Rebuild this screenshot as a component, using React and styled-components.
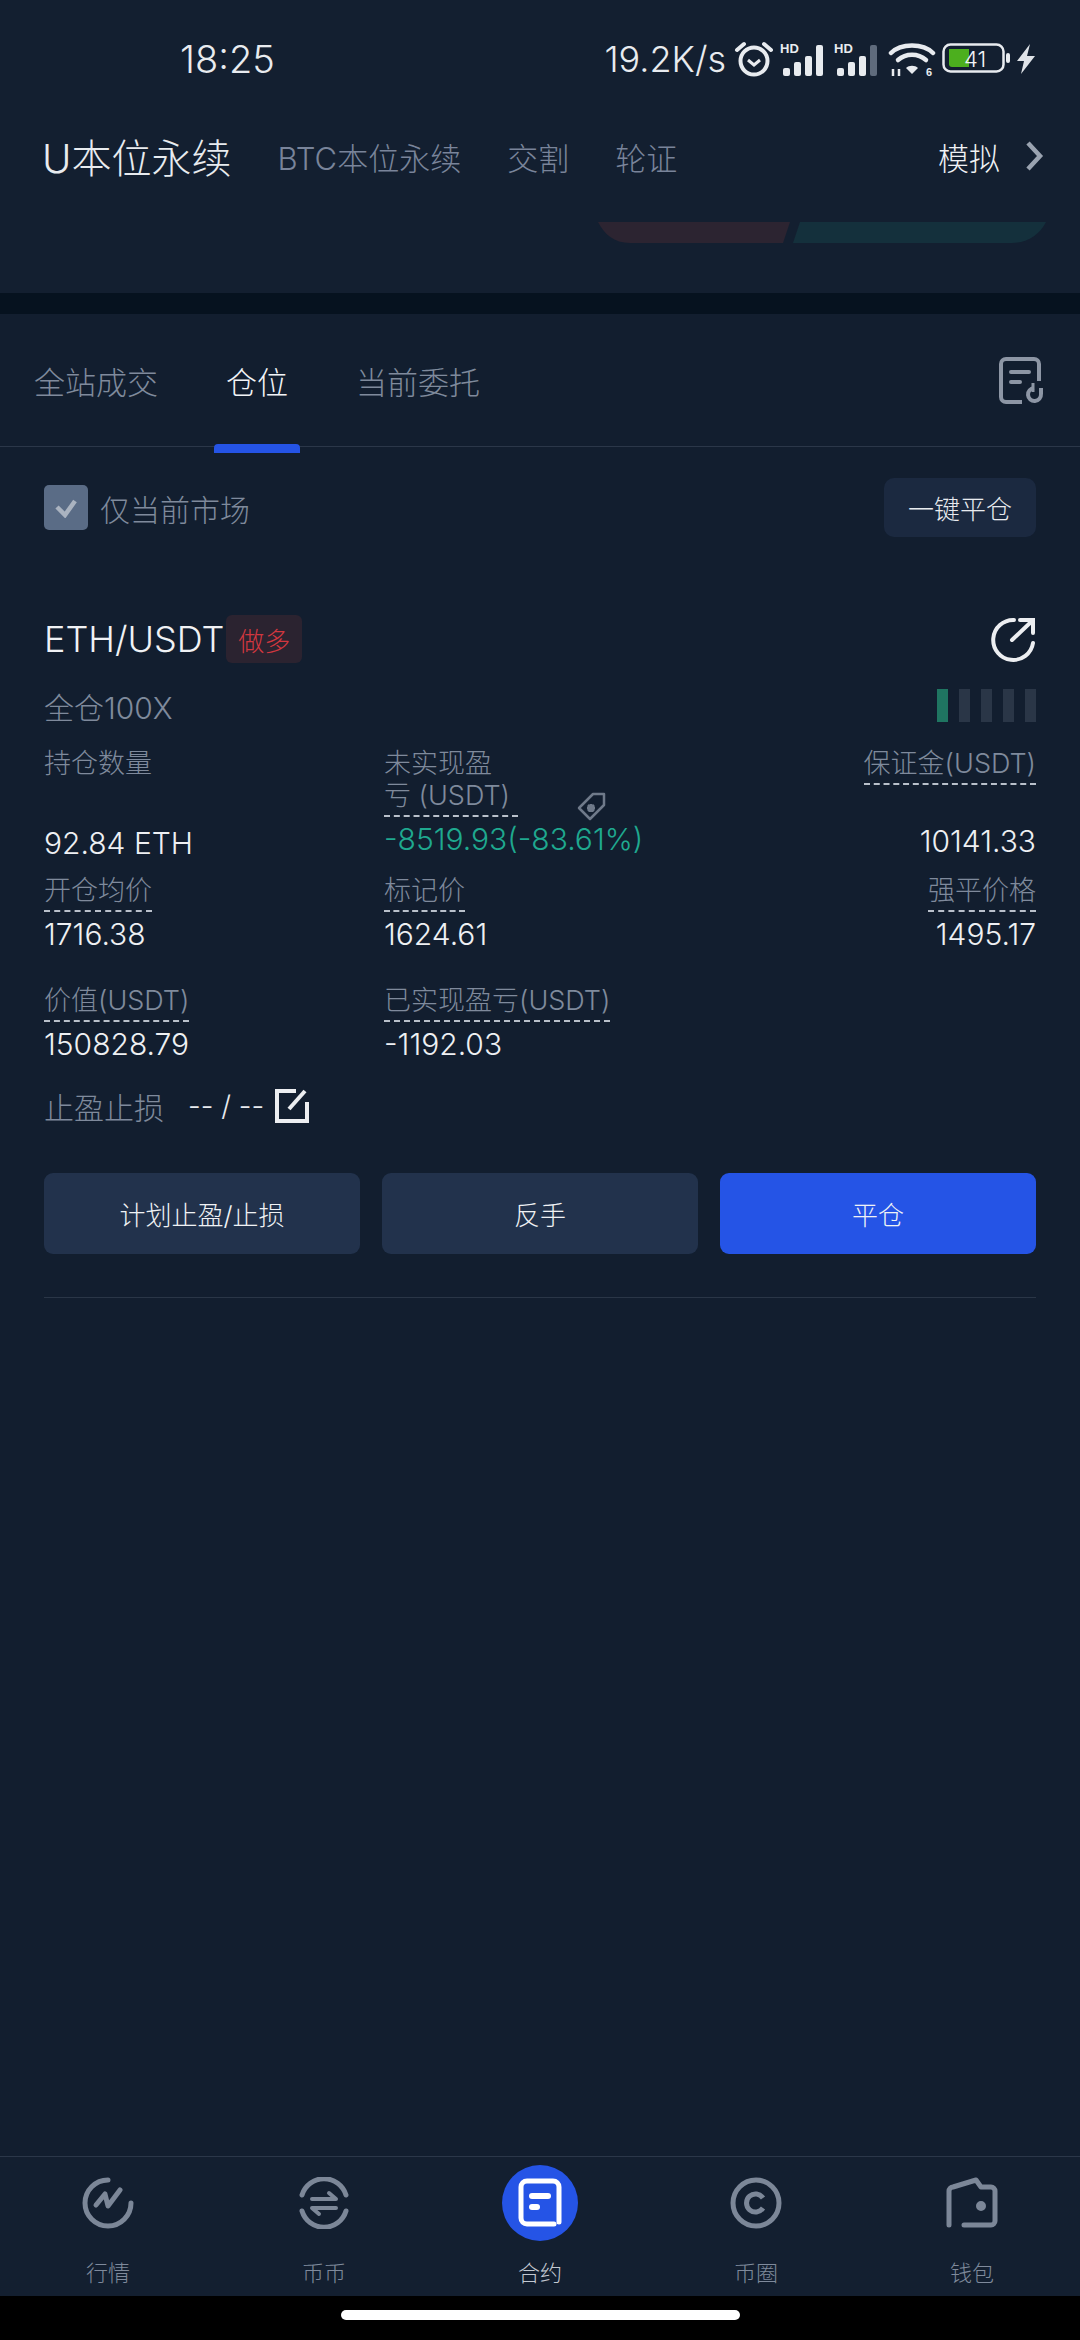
import React from "react";
import styled, { createGlobalStyle } from "styled-components";

const FONT = `"Inter", "Noto Sans CJK SC", sans-serif`;

const GlobalStyle = createGlobalStyle`
  html, body {
    margin: 0;
    padding: 0;
    background: #121e2f;
    font-family: ${FONT};
    font-weight: 300;
  }
  * { box-sizing: border-box; }
`;

const Page = styled.div`
  width: 1080px;
  height: 2340px;
  display: flex;
  flex-direction: column;
  background: #121e2f;
  color: #e8ebef;
  overflow: hidden;
`;

const Top = styled.div`
  height: 293px;
  background: #131f30;
  display: flex;
  flex-direction: column;
`;

const StatusBar = styled.div`
  height: 118px;
  padding: 0 44px 0 180px;
  display: flex;
  align-items: center;
  justify-content: space-between;
`;

const Clock = styled.span`
  font-size: 38px;
  color: #e8ebef;
`;

const StatusRight = styled.div`
  display: flex;
  align-items: center;
  gap: 6px;
`;

const Speed = styled.span`
  font-size: 36px;
  color: #e8ebef;
  margin-right: 2px;
`;

const Header = styled.div`
  height: 76px;
  padding: 0 36px 0 42px;
  display: flex;
  align-items: center;
`;

const HeaderMain = styled.span`
  font-size: 40px;
  color: #e8ebef;
  margin-right: 46px;
`;

const HeaderLink = styled.span`
  font-size: 31px;
  color: #79849a;
  margin-right: 46px;
`;

const HeaderEnd = styled.div`
  margin-left: auto;
  display: flex;
  align-items: center;
  gap: 24px;
  font-size: 31px;
  color: #f0f2f5;
`;

const DepthFoot = styled.div`
  margin-top: 28px;
  padding-left: 598px;
  display: flex;
`;

const Stripe = styled.div`
  height: 21px;
  background: #06121f;
`;

const Tabs = styled.div`
  position: relative;
  height: 133px;
  padding: 0 34px;
  display: flex;
  align-items: center;
  gap: 68px;
  border-bottom: 1px solid #2b3749;
`;

const Tab = styled.span`
  position: relative;
  font-size: 31px;
  color: ${(props) => (props.$active ? "#f2f4f7" : "#7f8a9c")};
  ${(props) =>
    props.$active &&
    `&::after {
      content: "";
      position: absolute;
      left: -12px;
      right: -12px;
      bottom: -50px;
      height: 9px;
      border-radius: 4px 4px 0 0;
      background: #2554e6;
    }`}
`;

const TabEnd = styled.div`
  margin-left: auto;
  display: flex;
  margin-right: 2px;
`;

const Filter = styled.div`
  padding: 31px 44px 0;
  display: flex;
  align-items: center;
  justify-content: space-between;
`;

const CheckLabel = styled.label`
  display: flex;
  align-items: center;
  gap: 12px;
  font-size: 30px;
  color: #7f8a9c;
`;

const CheckBox = styled.span`
  width: 44px;
  height: 45px;
  border-radius: 5px;
  background: #5a6c86;
  display: flex;
  align-items: center;
  justify-content: center;
`;

const CloseAll = styled.button`
  width: 152px;
  height: 59px;
  border: 0;
  border-radius: 10px;
  background: #1b2940;
  color: #e8ebef;
  font-family: ${FONT};
  font-weight: 300;
  font-size: 26px;
  padding: 0;
`;

const Card = styled.div`
  padding: 78px 44px 0;
  display: flex;
  flex-direction: column;
`;

const TitleRow = styled.div`
  height: 48px;
  display: flex;
  align-items: center;
  justify-content: space-between;
`;

const Pair = styled.div`
  display: flex;
  align-items: center;
  font-size: 36px;
  color: #f0f2f5;
`;

const SideTag = styled.span`
  width: 76px;
  height: 48px;
  margin-left: 2px;
  border-radius: 6px;
  background: #2b2330;
  color: #d1373f;
  font-size: 26px;
  display: flex;
  align-items: center;
  justify-content: center;
`;

const LeverRow = styled.div`
  margin-top: 26px;
  height: 33px;
  display: flex;
  align-items: center;
  justify-content: space-between;
  font-size: 30px;
  color: #7f8a9c;
`;

const Risk = styled.div`
  display: flex;
  gap: 11px;
`;

const RiskBar = styled.span`
  width: 11px;
  height: 33px;
  background: ${(props) => (props.$on ? "#1f7561" : "#2a3647")};
`;

const Grid = styled.div`
  margin-top: 26px;
  display: grid;
  grid-template-columns: 340px 1fr 1fr;
`;

const Cell = styled.div`
  position: relative;
  display: flex;
  flex-direction: column;
  align-items: ${(props) => (props.$end ? "flex-end" : "flex-start")};
  margin-bottom: ${(props) => props.$gap || 33}px;
`;

const Label = styled.span`
  font-size: 27px;
  line-height: 32px;
  color: #7f8a9c;
  width: ${(props) => (props.$w ? `${props.$w}px` : "auto")};
  padding-bottom: 3px;
  border-bottom: ${(props) => (props.$plain ? "none" : "2px dashed #b9c0cb")};
`;

const Value = styled.span`
  margin-top: ${(props) => props.$top || 4}px;
  font-size: 30px;
  line-height: 36px;
  color: ${(props) => (props.$green ? "#1fa98f" : "#eef0f3")};
`;

const TagMark = styled.span`
  position: absolute;
  left: 192px;
  top: 42px;
  display: flex;
`;

const StopRow = styled.div`
  height: 40px;
  display: flex;
  align-items: center;
  font-size: 30px;
  color: #7f8a9c;
  margin-top: -9px;
`;

const StopValue = styled.span`
  margin-left: 24px;
  margin-right: 10px;
  color: #e8ebef;
  font-size: 28px;
`;

const Actions = styled.div`
  margin-top: 47px;
  display: grid;
  grid-template-columns: repeat(3, 1fr);
  gap: 22px;
`;

const ActionButton = styled.button`
  height: 81px;
  border: 0;
  border-radius: 9px;
  padding: 0;
  background: ${(props) => (props.$primary ? "#2554e6" : "#22324c")};
  color: #f0f2f5;
  font-family: ${FONT};
  font-weight: 300;
  font-size: 26px;
`;

const CardRule = styled.div`
  margin-top: 43px;
  height: 1px;
  background: #2a3647;
`;

const Spacer = styled.div`
  flex: 1;
`;

const Nav = styled.nav`
  height: 140px;
  border-top: 1px solid #2b3749;
  background: #131f30;
  display: grid;
  grid-template-columns: repeat(5, 216px);
`;

const NavItem = styled.div`
  padding-top: 8px;
  display: flex;
  flex-direction: column;
  align-items: center;
  font-size: 22px;
  color: ${(props) => (props.$active ? "#c3c9d2" : "#7f8a9c")};
`;

const NavIcon = styled.span`
  width: 76px;
  height: 76px;
  border-radius: 50%;
  background: ${(props) => (props.$active ? "#2554e6" : "transparent")};
  display: flex;
  align-items: center;
  justify-content: center;
  margin-bottom: 14px;
`;

const HomeBar = styled.div`
  height: 44px;
  background: #000;
  padding-top: 14px;
  display: flex;
  justify-content: center;
`;

const HomePill = styled.span`
  width: 399px;
  height: 10px;
  border-radius: 5px;
  background: #fff;
`;

const AlarmIcon = () => (
  <svg width="40" height="40" viewBox="0 0 40 40" fill="none" stroke="#e8ebef">
    <circle cx="20" cy="22" r="13.5" strokeWidth="4" />
    <path d="M14 21l6 5 6-5" strokeWidth="3" />
    <path d="M3 11l7-6M37 11l-7-6" strokeWidth="4" strokeLinecap="round" />
  </svg>
);

const SignalIcon = ({ dim }) => (
  <svg width="48" height="34" viewBox="0 0 48 34">
    <text x="0" y="11" fontFamily="Liberation Sans" fontWeight="700" fontSize="13" fill="#e8ebef">
      HD
    </text>
    <rect x="3" y="26" width="7" height="8" rx="2" fill="#e8ebef" />
    <rect x="14" y="20" width="7" height="14" rx="2" fill="#e8ebef" />
    <rect x="25" y="14" width="7" height="20" rx="2" fill="#e8ebef" />
    <rect x="36" y="3" width="7" height="31" rx="2" fill={dim ? "#5f6b7c" : "#e8ebef"} />
  </svg>
);

const WifiIcon = () => (
  <svg width="48" height="36" viewBox="0 0 48 36" fill="none" stroke="#e8ebef">
    <path d="M3 12C13 2 35 2 45 12" strokeWidth="4.5" strokeLinecap="round" />
    <path d="M10 19c8-7 20-7 28 0" strokeWidth="4.5" strokeLinecap="round" />
    <path d="M24 33l-6-6c3-3 9-3 12 0z" fill="#e8ebef" stroke="none" />
    <path d="M5 28v7M11 28v7" strokeWidth="2.5" />
    <text x="38" y="35" fontFamily="Liberation Sans" fontWeight="700" fontSize="11" fill="#e8ebef" stroke="none">
      6
    </text>
  </svg>
);

const BatteryIcon = () => (
  <svg width="68" height="32" viewBox="0 0 68 32">
    <rect x="1.5" y="1.5" width="60" height="27" rx="7" fill="none" stroke="#e8ebef" strokeWidth="2.5" />
    <path d="M7 6h20v18H10a3 3 0 0 1-3-3z" fill="#4caf1e" />
    <rect x="64" y="10" width="4" height="10" rx="2" fill="#e8ebef" />
    <text x="33" y="24" textAnchor="middle" fontFamily="Inter" fontWeight="300" fontSize="22" fill="#f2f4f7">
      41
    </text>
  </svg>
);

const BoltIcon = () => (
  <svg width="20" height="30" viewBox="0 0 20 30">
    <path d="M14 0L1 17h7l-3 13 14-18h-8z" fill="#dfe3e8" />
  </svg>
);

const ChevronIcon = () => (
  <svg width="20" height="32" viewBox="0 0 20 32" fill="none">
    <path d="M4 3l12 13-12 13" stroke="#9aa3b0" strokeWidth="4.5" />
  </svg>
);

const DepthShape = () => (
  <svg width="450" height="22" viewBox="0 0 450 22">
    <path d="M0 0h192l-7 21H32C16 21 6 12 0 0z" fill="#2c2431" />
    <path d="M202 0h246c-6 12-18 21-34 21H195z" fill="#14303c" />
  </svg>
);

const OrdersIcon = () => (
  <svg width="46" height="48" viewBox="0 0 46 48" fill="none" stroke="#8d96a5" strokeWidth="4">
    <path d="M24 46H8a5 5 0 0 1-5-5V8a5 5 0 0 1 5-5h28a5 5 0 0 1 5 5v17" />
    <path d="M13 16h18M13 26h9" strokeLinecap="round" />
    <path d="M43 32v6a6.5 6.5 0 1 1-7-6" />
    <path d="M35 27v9" strokeWidth="3" />
  </svg>
);

const CheckMark = () => (
  <svg width="24" height="20" viewBox="0 0 24 20" fill="none">
    <path d="M3 9l8 8L21 3" stroke="#aab3c0" strokeWidth="4.5" />
  </svg>
);

const ShareIcon = () => (
  <svg width="46" height="46" viewBox="0 0 46 46" fill="none" stroke="#eceef1" strokeWidth="4" strokeLinecap="round">
    <path d="M24 4A20 20 0 1 0 43 27" />
    <path d="M22 24L41 6" />
    <path d="M30 4h13v13" />
  </svg>
);

const PriceTagIcon = () => (
  <svg width="32" height="32" viewBox="0 0 32 32" fill="none" stroke="#6f7a8a" strokeWidth="2.5">
    <path d="M3 18L17 4h11v11L14 29z" strokeLinejoin="round" />
    <path d="M11 18l8 0M15 14v8M12 15l6 6M18 15l-6 6" strokeWidth="2.5" />
  </svg>
);

const EditIcon = () => (
  <svg width="36" height="36" viewBox="0 0 36 36" fill="none" stroke="#eceef1" strokeWidth="4">
    <path d="M22 3H3v30h30V14" />
    <path d="M15 21L31 3" />
  </svg>
);

const MarketIcon = () => (
  <svg width="52" height="52" viewBox="0 0 52 52" fill="none" stroke="#7c8798" strokeWidth="5" strokeLinecap="round">
    <path d="M26 3A23 23 0 1 0 49 26" />
    <path d="M14 28l9-11 3 12 12-16" strokeLinejoin="round" />
  </svg>
);

const SpotIcon = () => (
  <svg width="52" height="52" viewBox="0 0 52 52" fill="none" stroke="#7c8798" strokeWidth="5" strokeLinecap="round">
    <path d="M4 18A23 23 0 0 1 48 18" />
    <path d="M48 34A23 23 0 0 1 4 34" />
    <path d="M14 22h24l-7-6" strokeWidth="4" strokeLinejoin="round" />
    <path d="M38 31H14l7 6" strokeWidth="4" strokeLinejoin="round" />
  </svg>
);

const ContractIcon = () => (
  <svg width="44" height="50" viewBox="0 0 44 50" fill="none" stroke="#fff" strokeWidth="5" strokeLinecap="round">
    <path d="M36 46H9a6 6 0 0 1-6-6V9a6 6 0 0 1 6-6h26a6 6 0 0 1 6 6v35" />
    <path d="M14 18h16" strokeWidth="6" />
    <path d="M14 29h5" strokeWidth="6" />
  </svg>
);

const CircleIcon = () => (
  <svg width="52" height="52" viewBox="0 0 52 52" fill="none" stroke="#7c8798" strokeWidth="5">
    <circle cx="26" cy="26" r="23" />
    <path d="M33 21a9 9 0 1 0 0 10" strokeWidth="5" />
  </svg>
);

const WalletIcon = () => (
  <svg width="52" height="52" viewBox="0 0 52 52" fill="none" stroke="#7c8798" strokeWidth="5" strokeLinecap="round" strokeLinejoin="round">
    <path d="M3 48V14a4 4 0 0 1 4-4L30 3l5 7h10a4 4 0 0 1 4 4v30a4 4 0 0 1-4 4H18" />
    <circle cx="35" cy="29" r="2.5" fill="#7c8798" />
  </svg>
);

const navItems = [
  { label: "行情", icon: <MarketIcon /> },
  { label: "币币", icon: <SpotIcon /> },
  { label: "合约", icon: <ContractIcon />, active: true },
  { label: "币圈", icon: <CircleIcon /> },
  { label: "钱包", icon: <WalletIcon /> },
];

const App = () => (
  <Page>
    <GlobalStyle />
    <Top>
      <StatusBar>
        <Clock>18:25</Clock>
        <StatusRight>
          <Speed>19.2K/s</Speed>
          <AlarmIcon />
          <SignalIcon />
          <SignalIcon dim />
          <WifiIcon />
          <BatteryIcon />
          <BoltIcon />
        </StatusRight>
      </StatusBar>
      <Header>
        <HeaderMain>U本位永续</HeaderMain>
        <HeaderLink>BTC本位永续</HeaderLink>
        <HeaderLink>交割</HeaderLink>
        <HeaderLink>轮证</HeaderLink>
        <HeaderEnd>
          模拟
          <ChevronIcon />
        </HeaderEnd>
      </Header>
      <DepthFoot>
        <DepthShape />
      </DepthFoot>
    </Top>
    <Stripe />
    <Tabs>
      <Tab>全站成交</Tab>
      <Tab $active>仓位</Tab>
      <Tab>当前委托</Tab>
      <TabEnd>
        <OrdersIcon />
      </TabEnd>
    </Tabs>
    <Filter>
      <CheckLabel>
        <CheckBox>
          <CheckMark />
        </CheckBox>
        仅当前市场
      </CheckLabel>
      <CloseAll>一键平仓</CloseAll>
    </Filter>
    <Card>
      <TitleRow>
        <Pair>
          ETH/USDT
          <SideTag>做多</SideTag>
        </Pair>
        <ShareIcon />
      </TitleRow>
      <LeverRow>
        全仓100X
        <Risk>
          <RiskBar $on />
          <RiskBar />
          <RiskBar />
          <RiskBar />
          <RiskBar />
        </Risk>
      </LeverRow>
      <Grid>
        <Cell $gap={14}>
          <Label $plain>持仓数量</Label>
          <Value $top={42}>92.84 ETH</Value>
        </Cell>
        <Cell $gap={14}>
          <Label $w={134}>未实现盈亏 (USDT)</Label>
          <TagMark>
            <PriceTagIcon />
          </TagMark>
          <Value $green>-8519.93(-83.61%)</Value>
        </Cell>
        <Cell $end $gap={14}>
          <Label>保证金(USDT)</Label>
          <Value $top={38}>10141.33</Value>
        </Cell>
        <Cell>
          <Label>开仓均价</Label>
          <Value>1716.38</Value>
        </Cell>
        <Cell>
          <Label>标记价</Label>
          <Value>1624.61</Value>
        </Cell>
        <Cell $end>
          <Label>强平价格</Label>
          <Value>1495.17</Value>
        </Cell>
        <Cell>
          <Label>价值(USDT)</Label>
          <Value>150828.79</Value>
        </Cell>
        <Cell>
          <Label>已实现盈亏(USDT)</Label>
          <Value>-1192.03</Value>
        </Cell>
      </Grid>
      <StopRow>
        止盈止损
        <StopValue>-- / --</StopValue>
        <EditIcon />
      </StopRow>
      <Actions>
        <ActionButton>计划止盈/止损</ActionButton>
        <ActionButton>反手</ActionButton>
        <ActionButton $primary>平仓</ActionButton>
      </Actions>
      <CardRule />
    </Card>
    <Spacer />
    <Nav>
      {navItems.map((item) => (
        <NavItem key={item.label} $active={item.active}>
          <NavIcon $active={item.active}>{item.icon}</NavIcon>
          {item.label}
        </NavItem>
      ))}
    </Nav>
    <HomeBar>
      <HomePill />
    </HomeBar>
  </Page>
);

export default App;
